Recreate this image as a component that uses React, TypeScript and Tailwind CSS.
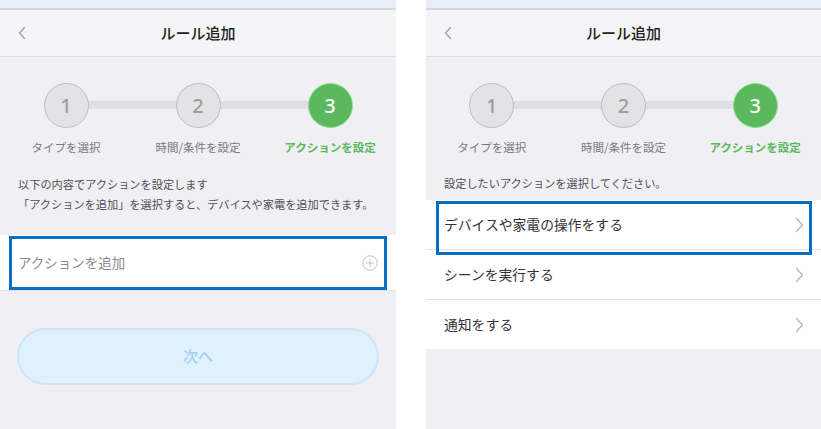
import { Fragment } from 'react';

const font = { fontFamily: '"Noto Sans CJK JP", "Noto Sans", sans-serif' };

function BackChevron() {
  return (
    <svg width="10" height="14" viewBox="0 0 10 14" fill="none">
      <path d="M7.5 1.5L2.5 7l5 5.5" stroke="#a0a0a4" strokeWidth="1.4" strokeLinecap="round" strokeLinejoin="round" />
    </svg>
  );
}

function RowChevron() {
  return (
    <svg width="9" height="16" viewBox="0 0 9 16" fill="none">
      <path d="M1.5 1.5L7.5 8l-6 6.5" stroke="#b4b4b8" strokeWidth="1.3" strokeLinecap="round" strokeLinejoin="round" />
    </svg>
  );
}

function PlusCircle() {
  return (
    <svg width="16" height="16" viewBox="0 0 16 16" fill="none">
      <circle cx="8" cy="8" r="7.2" stroke="#c2c2c6" strokeWidth="1" />
      <path d="M8 4v8M4 8h8" stroke="#c2c2c6" strokeWidth="1" />
    </svg>
  );
}

const steps = [
  { n: '1', label: 'タイプを選択' },
  { n: '2', label: '時間/条件を設定' },
  { n: '3', label: 'アクションを設定' },
];

function Header() {
  return (
    <>
      <div className="h-[8px] bg-[#e7eef6]" />
      <div className="h-[2px] bg-[#d6d9dd]" />
      <div className="relative h-[47px] bg-[#f5f5f7] border-b border-[#dedee2] flex items-center justify-center">
        <div className="absolute left-[17px] top-[16px]">
          <BackChevron />
        </div>
        <span className="text-[15px] font-medium text-[#222]">ルール追加</span>
      </div>
    </>
  );
}

function Stepper() {
  return (
    <div className="relative pt-[26px]">
      {/* connector bar */}
      <div className="absolute left-[66px] right-[66px] top-[44px] h-[8px] bg-[#dfdfe1]" />
      <div className="relative grid grid-cols-3">
        {steps.map((s, i) => (
          <Fragment key={s.n}>
            <div className="flex flex-col items-center">
              {i === 2 ? (
                <div className="w-[45px] h-[45px] rounded-full bg-[#5cb85c] border-[1.5px] border-[#88e28a] flex items-center justify-center text-white text-[20px] font-medium" style={{ fontFamily: '"Noto Sans", sans-serif' }}>
                  {s.n}
                </div>
              ) : (
                <div className="w-[45px] h-[45px] rounded-full bg-[#e3e3e5] border-[1.5px] border-[#bdbdc0] flex items-center justify-center text-[#9c9c9f] text-[20px] font-medium" style={{ fontFamily: '"Noto Sans", sans-serif' }}>
                  {s.n}
                </div>
              )}
              <span className={i === 2 ? 'mt-[11px] text-[11.5px] leading-[16px] font-bold text-[#5cb85c]' : 'mt-[11px] text-[11.5px] leading-[16px] text-[#7a7a7e]'}>
                {s.label}
              </span>
            </div>
          </Fragment>
        ))}
      </div>
    </div>
  );
}

function LeftPanel() {
  return (
    <div className="w-[396px] h-full flex flex-col bg-[#efeff4]">
      <Header />
      <Stepper />
      <div className="mt-[19px] px-[18px] text-[11.2px] leading-[20px] text-[#505053]">
        <p>以下の内容でアクションを設定します</p>
        <p>「アクションを追加」を選択すると、デバイスや家電を追加できます。</p>
      </div>
      <div className="relative mt-[21px] h-[56px] bg-white border-b border-[#e2e2e6] flex items-center justify-between pl-[18px] pr-[18px]">
        <span className="text-[13.5px] text-[#8a8a8e]">アクションを追加</span>
        <PlusCircle />
        <div className="absolute left-[9px] right-[9px] top-[1px] bottom-[0px] border-[3px] border-[#0a6fc2]" />
      </div>
      <div className="mt-[37px] mx-[17px] h-[57px] rounded-full bg-[#e0f0fd] border-2 border-[#cbe5fa] flex items-center justify-center">
        <span className="text-[15px] font-medium text-[#9fd0f6]">次へ</span>
      </div>
    </div>
  );
}

const rows = ['デバイスや家電の操作をする', 'シーンを実行する', '通知をする'];

function RightPanel() {
  return (
    <div className="w-[395px] h-full flex flex-col bg-[#efeff4]">
      <Header />
      <Stepper />
      <div className="mt-[18px] px-[18px] text-[11.2px] leading-[20px] text-[#505053]">
        <p>設定したいアクションを選択してください。</p>
      </div>
      <div className="mt-[7px] bg-white">
        {rows.map((r, i) => (
          <div key={r} className={i < 2 ? 'relative h-[50px] border-b border-[#e2e2e6] flex items-center justify-between pl-[18px] pr-[17px]' : 'relative h-[49px] flex items-center justify-between pl-[18px] pr-[17px]'}>
            <span className="text-[13.8px] text-[#333336]">{r}</span>
            <RowChevron />
            {i === 0 && (
              <div className="absolute left-[10px] right-[9px] top-[1px] bottom-[-6px] border-[3px] border-[#0a6fc2] z-10" />
            )}
          </div>
        ))}
      </div>
    </div>
  );
}

export default function App() {
  return (
    <div className="w-[821px] h-[429px] bg-white flex overflow-hidden" style={font}>
      <LeftPanel />
      <div className="w-[30px] shrink-0" />
      <RightPanel />
    </div>
  );
}
